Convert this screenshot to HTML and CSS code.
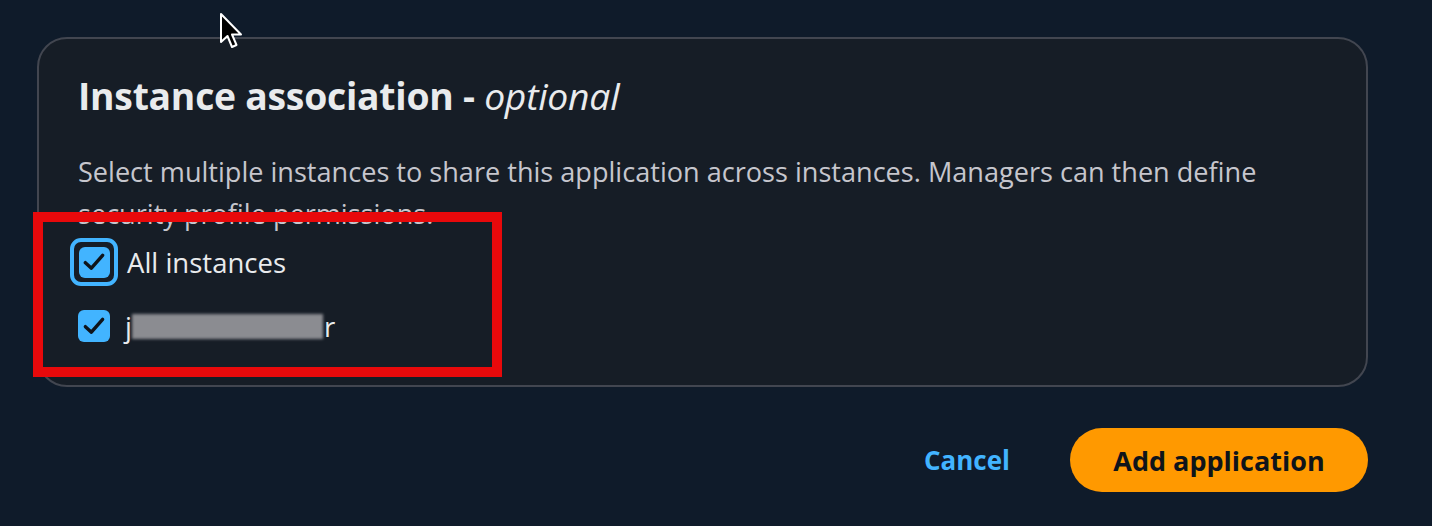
FILE: index.html
```html
<!DOCTYPE html>
<html>
<head>
<meta charset="utf-8">
<link rel="stylesheet" href="styles.css">
</head>
<body>
<div class="page">
  <section class="card">
    <h2 class="title">Instance association - <em>optional</em></h2>
    <p class="desc">Select multiple instances to share this application across instances. Managers can then define security profile permissions.</p>
    <div class="options">
      <label class="option">
        <span class="ring"><span class="box"><svg viewBox="0 0 16 16" width="26" height="26"><path d="M2.7 8.4 L6.4 11.8 L13.3 3.9" fill="none" stroke="#0f141a" stroke-width="2.1" stroke-linecap="round" stroke-linejoin="round"/></svg></span></span>
        <span class="label">All instances</span>
      </label>
      <label class="option">
        <span class="box plain"><svg viewBox="0 0 16 16" width="26" height="26"><path d="M2.7 8.4 L6.4 11.8 L13.3 3.9" fill="none" stroke="#0f141a" stroke-width="2.1" stroke-linecap="round" stroke-linejoin="round"/></svg></span>
        <span class="label">j<span class="blur"></span>r</span>
      </label>
    </div>
    <div class="highlight"></div>
  </section>
  <div class="actions">
    <button class="link">Cancel</button>
    <button class="primary">Add application</button>
  </div>
  <svg class="cursor" width="26" height="38" viewBox="0 0 26 38"><path d="M2 2 L2 30 L8.5 24 L13 35 L17.5 33 L13 22.5 L22 22.5 Z" fill="#000" stroke="#fff" stroke-width="2" stroke-linejoin="round"/></svg>
</div>
</body>
</html>
```
FILE: styles.css
```css
html, body {
  margin: 0;
  padding: 0;
  background: #0f1b2a;
}
body {
  font-family: "Open Sans", "Noto Sans", sans-serif;
  width: 1432px;
  height: 526px;
  overflow: hidden;
}
.page {
  position: relative;
  padding: 37px 64px 0 37px;
}
.card {
  position: relative;
  box-sizing: border-box;
  height: 350px;
  background: #161d26;
  border: 2px solid #424650;
  border-radius: 30px;
  padding: 33px 40px 0 39px;
}
.title {
  margin: 0;
  font-size: 37.3px;
  font-weight: 700;
  line-height: 48px;
  color: #e9ebed;
  letter-spacing: -0.25px;
}
.title em {
  font-weight: 400;
  font-style: italic;
}
.desc {
  margin: 31px 0 0;
  font-size: 27.1px;
  line-height: 42px;
  color: #c6c6cd;
  max-width: 1220px;
}
.options {
  position: absolute;
  left: 31px;
  top: 199px;
  display: flex;
  flex-direction: column;
  gap: 16px;
}
.option {
  display: flex;
  align-items: center;
  gap: 8px;
  height: 48px;
}
.ring {
  box-sizing: border-box;
  width: 48px;
  height: 48px;
  border: 4px solid #42b4ff;
  border-radius: 11px;
  display: flex;
  align-items: center;
  justify-content: center;
}
.box {
  width: 31px;
  height: 31px;
  background: #42b4ff;
  border-radius: 6px;
  display: flex;
  align-items: center;
  justify-content: center;
}
.box.plain {
  width: 32px;
  height: 32px;
  margin-left: 8px;
  margin-right: 7px;
}
.label {
  font-size: 27.5px;
  color: #e9ebed;
  display: flex;
  align-items: center;
}
.ring + .label {
  margin-left: 1px;
}
.blur {
  display: inline-block;
  width: 191px;
  height: 25px;
  margin: 0 1px 0 0;
  background: #8b8c91;
  filter: blur(1.5px);
}
.highlight {
  position: absolute;
  left: -6px;
  top: 173px;
  width: 469px;
  height: 165px;
  box-sizing: border-box;
  border: 10px solid #e8090b;
}
.actions {
  display: flex;
  justify-content: flex-end;
  align-items: center;
  gap: 60px;
  margin-top: 41px;
}
.actions button {
  font-family: inherit;
  cursor: pointer;
}
.link {
  background: none;
  border: none;
  padding: 0;
  font-size: 26px;
  font-weight: 700;
  color: #42b4ff;
}
.primary {
  width: 298px;
  height: 64px;
  border: none;
  border-radius: 32px;
  background: #ff9900;
  color: #0f141a;
  font-size: 27px;
  font-weight: 700;
}
.cursor {
  position: absolute;
  left: 219px;
  top: 12px;
}
```
